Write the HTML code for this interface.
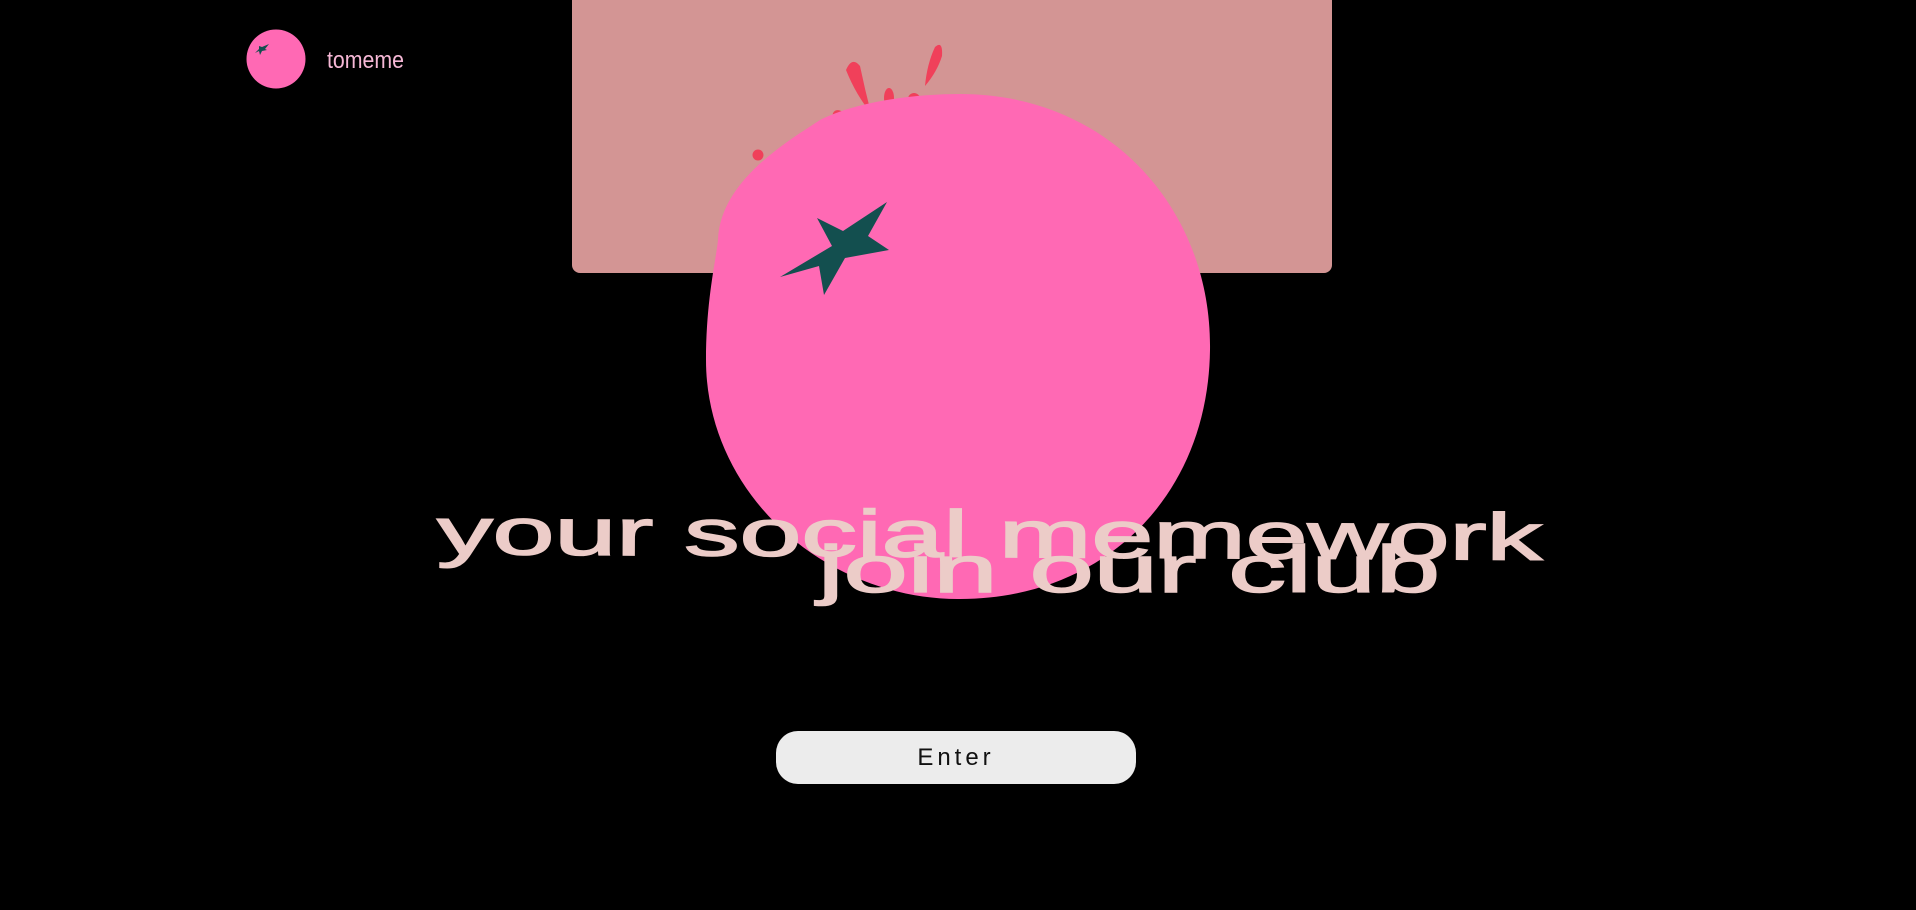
<!DOCTYPE html>
<html><head><meta charset="utf-8"><style>
html,body{margin:0;padding:0;background:#000;width:1916px;height:910px;overflow:hidden}
svg{display:block}
.btn{position:absolute;left:776px;top:731px;width:360px;height:53px;border-radius:22px;background:#ececec;font-family:"Liberation Sans Narrow","Liberation Sans",sans-serif;font-size:24px;letter-spacing:4px;color:#111;text-align:center;line-height:53px}
</style></head><body>
<svg width="1916" height="910" viewBox="0 0 1916 910" style="position:absolute;left:0;top:0">
<rect x="572" y="-10" width="760" height="283" rx="8" fill="#d39594"/>
<g fill="#f0405a">
<circle cx="758" cy="155" r="5.5"/>
<ellipse cx="787" cy="158" rx="15" ry="5" transform="rotate(8 787 158)"/>
<ellipse cx="819" cy="139" rx="6" ry="9" transform="rotate(-35 819 139)"/>
<ellipse cx="841" cy="120" rx="7" ry="11" transform="rotate(-35 841 120)"/>
<path d="M846 70 Q852 56 860 66 Q865 90 871 113 Q856 95 846 70Z"/>
<ellipse cx="889" cy="98" rx="5" ry="10"/>
<ellipse cx="914" cy="99" rx="6" ry="6"/>
<path d="M935 47 Q943 40 942 56 Q937 72 925 86 Q927 64 935 47Z"/>
</g>
<path d="M960 94 C1110 94 1212 210 1210 350 C1208 500 1100 600 958 599 C820 598 706 490 706 360 C706 300 716 260 718 240 C720 180 790 140 820 120 C860 100 920 94 960 94Z" fill="#ff69b4"/>
<path d="M887 202 L868 236 L889 250 L845 258 L824 295 L819 266 L780 277 L832 246 L817 218 L843 231 Z" fill="#134f4f"/>
<circle cx="276" cy="59" r="29.5" fill="#ff69b4"/>
<path d="M269 44 L265 49 L267 50 L262 51 L260 55 L259 51 L255 53 L259 49 L259 46 L262 47 Z" fill="#134f4f"/>
<text x="327" y="68" font-family="Liberation Sans Narrow, Liberation Sans, sans-serif" font-size="24" fill="#f6b8d6" textLength="77" lengthAdjust="spacingAndGlyphs">tomeme</text>
<g font-family="Liberation Sans, sans-serif" fill="#ecccc8" stroke="#ecccc8" stroke-width="1.5">
<text x="0" y="0" font-size="66" textLength="1105" lengthAdjust="spacingAndGlyphs" transform="translate(437 554) rotate(0.3)">your social memework</text>
<text x="0" y="0" font-size="66" textLength="622" lengthAdjust="spacingAndGlyphs" transform="translate(818 592)">join our club</text>
</g>
</svg>
<div class="btn">Enter</div>
</body></html>
